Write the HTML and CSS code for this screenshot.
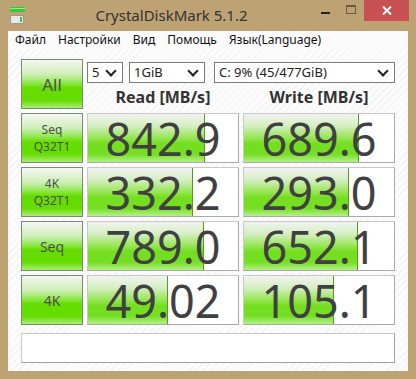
FILE: index.html
```html
<!DOCTYPE html>
<html>

<head>
  <meta charset="utf-8">
  <link rel="stylesheet" href="styles.css">
  <title>CrystalDiskMark 5.1.2</title>
</head>

<body>
  <div class="window">
    <div class="titlebar">
      <svg class="appIcon" width="18" height="20" viewBox="0 0 18 20">
        <rect x="1" y="0" width="15" height="5" rx="1" fill="#3cc43c" />
        <rect x="1" y="1" width="15" height="1" fill="#8ef08e" />
        <rect x="1" y="8" width="14" height="9" rx="2" fill="#9a9a9a" />
        <rect x="2" y="9" width="12" height="7" rx="1" fill="#e8e8e8" />
        <rect x="11" y="10" width="2" height="5" fill="#3cc43c" />
      </svg>
      <div class="title">CrystalDiskMark 5.1.2</div>
      <div class="controls">
        <span class="ctl minimize"><i></i></span>
        <span class="ctl maximize"><i></i></span>
        <span class="ctl close">
          <svg width="10" height="9" viewBox="0 0 10 9">
            <path d="M1 0.5 L9 8.5 M9 0.5 L1 8.5" stroke="#fff" stroke-width="2" />
          </svg>
        </span>
      </div>
    </div>
    <div class="client">
      <div class="menu">
        <span>Файл</span>
        <span>Настройки</span>
        <span>Вид</span>
        <span>Помощь</span>
        <span>Язык(Language)</span>
      </div>
      <div class="main">
        <div class="grid">
          <div class="testBtn all">All</div>
          <div class="topArea">
            <div class="options">
              <div class="select s1">5<b></b></div>
              <div class="select s2">1GiB<b></b></div>
              <div class="select s3">C: 9% (45/477GiB)<b></b></div>
            </div>
            <div class="heads">
              <div class="head">Read [MB/s]</div>
              <div class="head">Write [MB/s]</div>
            </div>
          </div>

          <div class="testBtn">Seq<br>Q32T1</div>
          <div class="cell"><div class="fill" style="width:117px"></div><div class="value">842.9</div></div>
          <div class="cell"><div class="fill" style="width:115px"></div><div class="value">689.6</div></div>

          <div class="testBtn">4K<br>Q32T1</div>
          <div class="cell"><div class="fill" style="width:105px"></div><div class="value">332.2</div></div>
          <div class="cell"><div class="fill" style="width:105px"></div><div class="value">293.0</div></div>

          <div class="testBtn big">Seq</div>
          <div class="cell"><div class="fill" style="width:116px"></div><div class="value">789.0</div></div>
          <div class="cell"><div class="fill" style="width:114px"></div><div class="value">652.1</div></div>

          <div class="testBtn big">4K</div>
          <div class="cell"><div class="fill" style="width:80px"></div><div class="value">49.02</div></div>
          <div class="cell"><div class="fill" style="width:90px"></div><div class="value">105.1</div></div>
        </div>
        <div class="comment"></div>
      </div>
    </div>
  </div>
</body>

</html>
```

FILE: styles.css
```css
body {
  margin: 0;
  background: #bda274;
  font-family: "Noto Sans", "Open Sans", sans-serif;
}

.window {
  width: 416px;
  height: 379px;
  background: #bda274;
  display: flex;
  flex-direction: column;
}

.titlebar {
  height: 31px;
  display: flex;
}

.appIcon {
  margin: 7px 0 0 9px;
}

.title {
  flex: 1;
  text-align: center;
  font-size: 15px;
  color: #333;
  line-height: 30px;
  padding-left: 4px;
}

.controls {
  display: flex;
  margin-right: 7px;
  height: 21px;
}

.ctl {
  display: flex;
  align-items: center;
  justify-content: center;
  height: 21px;
}

.minimize {
  width: 26px;
}

.minimize i {
  width: 9px;
  height: 2px;
  background: #222;
  margin-top: 5px;
}

.maximize {
  width: 26px;
}

.maximize i {
  width: 8px;
  height: 6px;
  border: 1px solid #6a5c40;
  border-top-width: 2px;
  margin-top: -2px;
}

.close {
  width: 45px;
  background: #c75050;
}

.client {
  margin: 0 8px 8px 8px;
  flex: 1;
  display: flex;
  flex-direction: column;
}

.menu {
  height: 19px;
  background: #fbfbfb;
  display: flex;
  font-size: 12px;
  line-height: 18px;
  color: #111;
  padding-left: 7px;
  gap: 12px;
}

.main {
  flex: 1;
  background-color: #fcfcfc;
  background-image: repeating-linear-gradient(135deg, #fcfcfc 0, #fcfcfc 4px, #f3f3f3 4px, #f3f3f3 5px);
  padding: 9px 13px 0 13px;
}

.grid {
  display: grid;
  grid-template-columns: 62px 152px 152px;
  grid-template-rows: repeat(5, 50px);
  gap: 4px;
}

.testBtn {
  box-sizing: border-box;
  border: 1px solid #7b8a72;
  background: linear-gradient(#f6f7f4 0%, #cdeeb6 30%, #8ee84a 48%, #66dd00 58%, #66dd00 84%, #aaec78 100%);
  color: #4e4e4e;
  font-size: 12px;
  line-height: 17px;
  text-align: center;
  display: flex;
  align-items: center;
  justify-content: center;
}

.testBtn.all {
  font-size: 17px;
}

.testBtn.big {
  font-size: 14px;
}

.topArea {
  grid-column: 2 / 4;
  display: flex;
  flex-direction: column;
}

.options {
  display: flex;
  margin-top: 3px;
  height: 21px;
}

.select {
  box-sizing: border-box;
  height: 21px;
  border: 1px solid #7a7a7a;
  background: #fff;
  font-size: 13px;
  line-height: 19px;
  padding-left: 4px;
  color: #222;
  display: flex;
  justify-content: space-between;
  align-items: center;
}

.select b {
  width: 6px;
  height: 6px;
  border-right: 2px solid #222;
  border-bottom: 2px solid #222;
  transform: rotate(45deg);
  margin: -4px 7px 0 0;
}

.s1 {
  width: 36px;
}

.s2 {
  width: 76px;
  margin-left: 6px;
}

.s3 {
  width: 181px;
  margin-left: 9px;
}

.heads {
  display: flex;
  gap: 4px;
  margin-top: 3px;
}

.head {
  width: 152px;
  text-align: center;
  font-weight: bold;
  font-size: 16px;
  line-height: 23px;
  color: #333;
}

.cell {
  box-sizing: border-box;
  border: 1px solid #c8c8c8;
  border-right-color: #a9a9a9;
  border-bottom-color: #a9a9a9;
  background: #fff;
  display: grid;
}

.fill {
  grid-area: 1 / 1;
  box-sizing: border-box;
  border-right: 1px solid #4f9d22;
  background: linear-gradient(#f2f3f0 0%, #d4eec2 25%, #96e652 50%, #74de20 62%, #76df24 84%, #b4f088 100%);
}

.value {
  grid-area: 1 / 1;
  text-align: center;
  font-size: 45px;
  line-height: 46px;
  color: #404040;
  padding-top: 2px;
}

.comment {
  box-sizing: border-box;
  margin-top: 8px;
  height: 30px;
  border: 1px solid #c8c8c8;
  border-right-color: #a0a0a0;
  border-bottom-color: #a0a0a0;
  background: #fff;
}
```
